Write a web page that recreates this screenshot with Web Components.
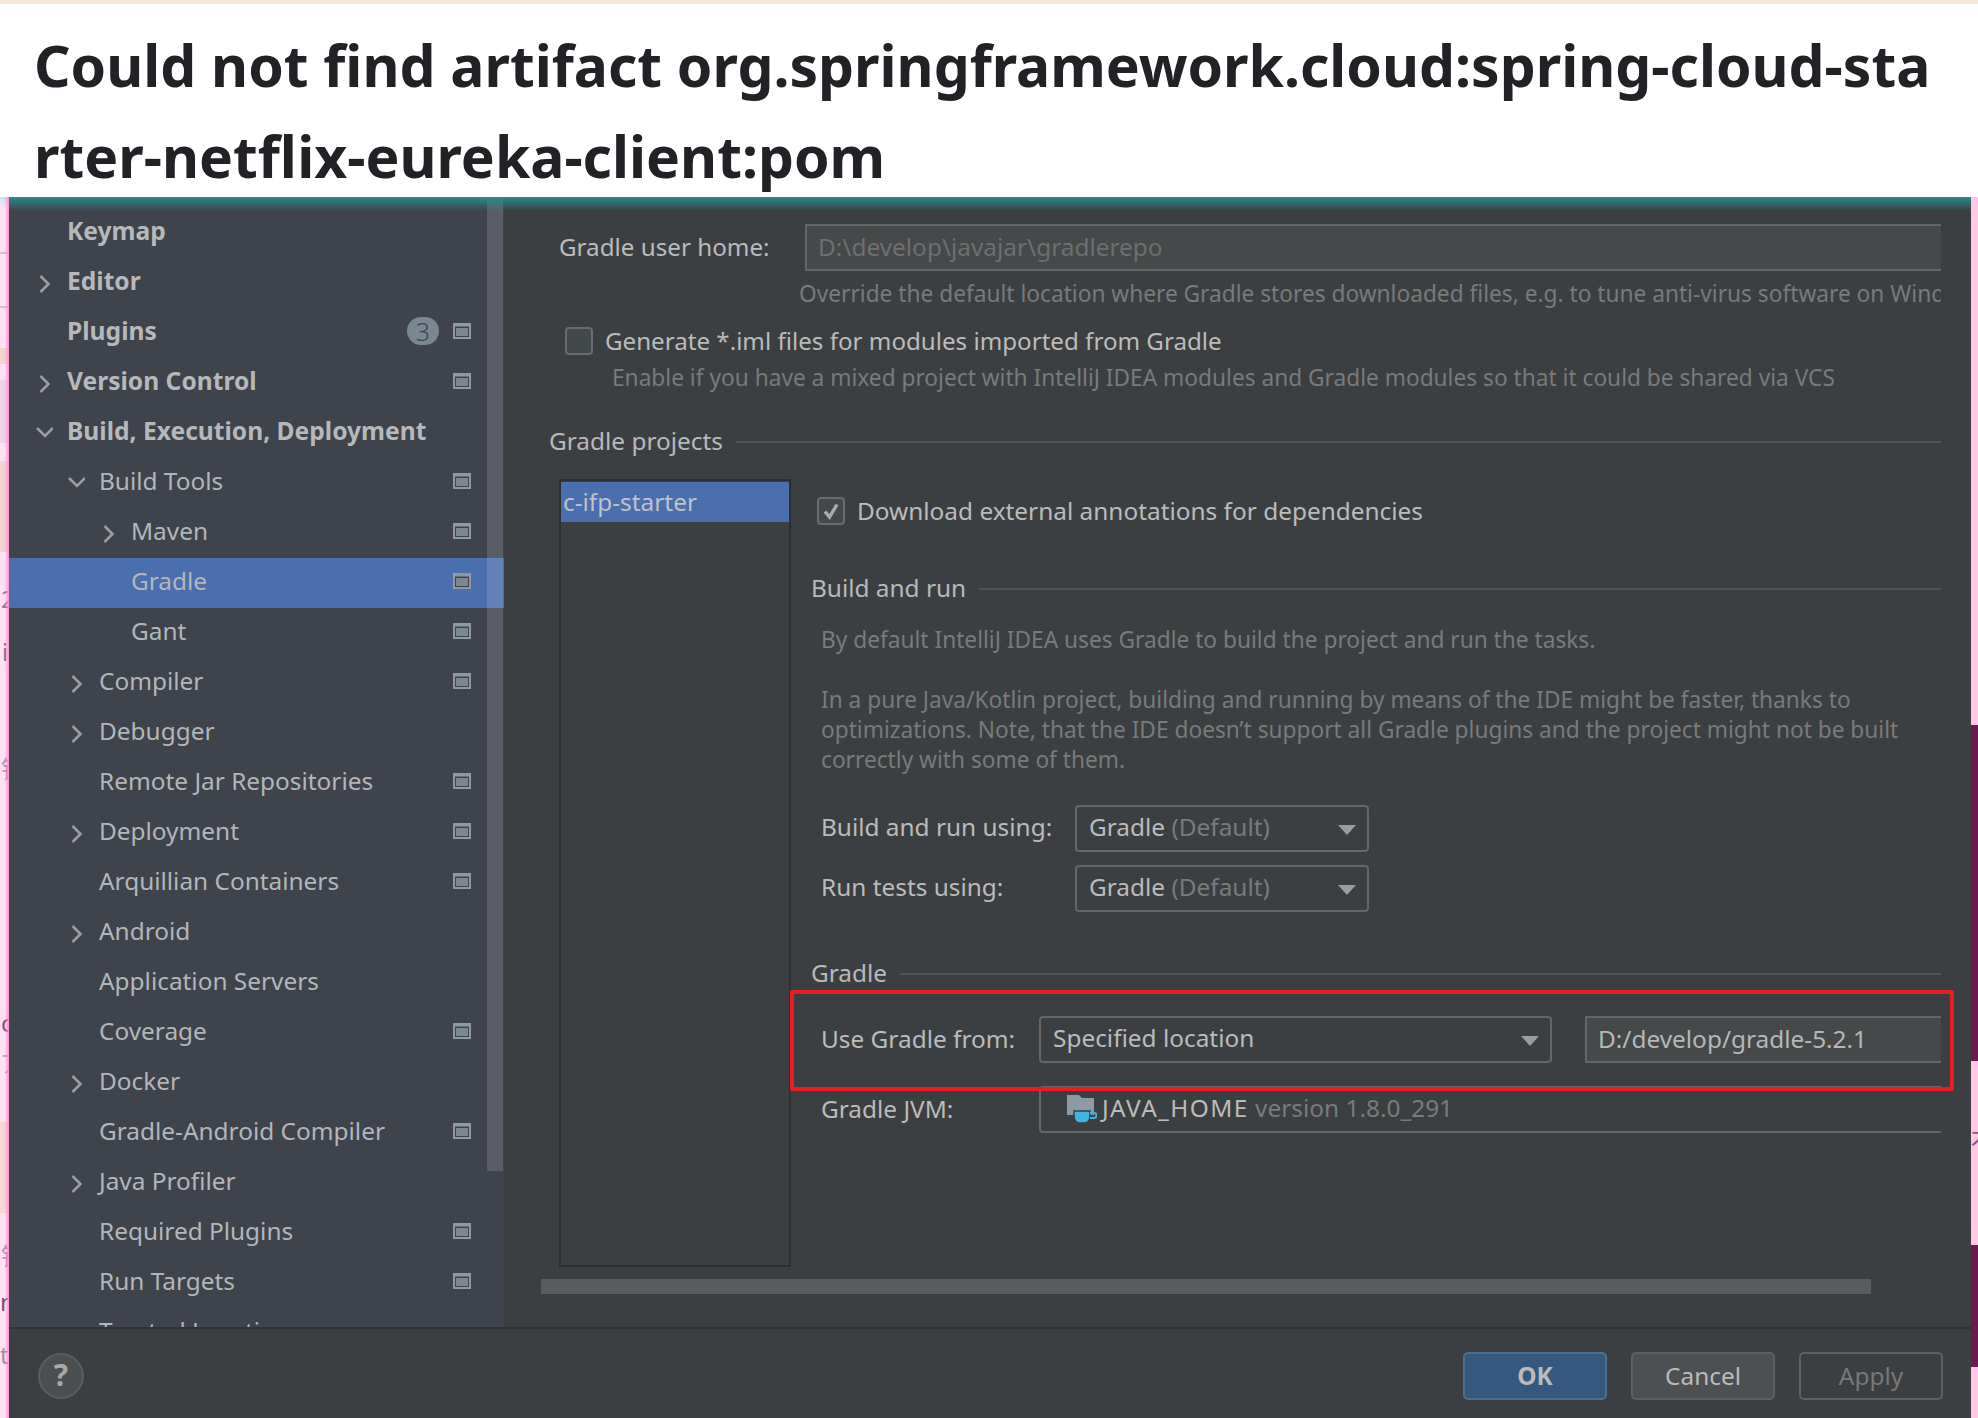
<!DOCTYPE html>
<html lang="en">

<head>
    <meta charset="UTF-8">
    <title>Could not find artifact</title>
    <style>
        html, body { margin: 0; height: 1418px; overflow: hidden; background: #fff; }
        body { font-family: "Noto Sans", "Noto Sans CJK SC", sans-serif; }
    </style>
</head>

<body>
    <article-shot>
        <article-title>Could not find artifact org.springframework.cloud:spring-cloud-starter-netflix-eureka-client:pom</article-title>
        <edge-strip slot="left" side="left"></edge-strip>
        <settings-dialog slot="dialog">
            <settings-tree slot="tree">
                <tree-row bold>Keymap</tree-row>
                <tree-row bold arrow="right">Editor</tree-row>
                <tree-row bold badge="3" mark>Plugins</tree-row>
                <tree-row bold arrow="right" mark>Version Control</tree-row>
                <tree-row bold arrow="down">Build, Execution, Deployment</tree-row>
                <tree-row level="1" arrow="down" mark>Build Tools</tree-row>
                <tree-row level="2" arrow="right" mark>Maven</tree-row>
                <tree-row level="2" selected mark>Gradle</tree-row>
                <tree-row level="2" mark>Gant</tree-row>
                <tree-row level="1" arrow="right" mark>Compiler</tree-row>
                <tree-row level="1" arrow="right">Debugger</tree-row>
                <tree-row level="1" mark>Remote Jar Repositories</tree-row>
                <tree-row level="1" arrow="right" mark>Deployment</tree-row>
                <tree-row level="1" mark>Arquillian Containers</tree-row>
                <tree-row level="1" arrow="right">Android</tree-row>
                <tree-row level="1">Application Servers</tree-row>
                <tree-row level="1" mark>Coverage</tree-row>
                <tree-row level="1" arrow="right">Docker</tree-row>
                <tree-row level="1" mark>Gradle-Android Compiler</tree-row>
                <tree-row level="1" arrow="right">Java Profiler</tree-row>
                <tree-row level="1" mark>Required Plugins</tree-row>
                <tree-row level="1" mark>Run Targets</tree-row>
                <tree-row level="1">Trusted Locations</tree-row>
            </settings-tree>
            <gradle-panel slot="panel"></gradle-panel>
            <dialog-footer slot="footer"></dialog-footer>
        </settings-dialog>
        <edge-strip slot="right" side="right"></edge-strip>
    </article-shot>

    <script>
        // small helper, every element gets an open shadow root with its own style
        function shadow(el, css, html) {
            var root = el.attachShadow({ mode: 'open' });
            root.innerHTML = '<style>' + css + '</style>' + html;
            return root;
        }

        class ArticleShot extends HTMLElement {
            connectedCallback() {
                shadow(this, `
                    :host { display: flex; flex-direction: column; width: 1978px; height: 1418px; overflow: hidden; }
                    .paper { height: 4px; background: #f1e9d5; }
                    .row { display: flex; height: 1221px; }
                    .dialog { flex: 1; min-width: 0; display: flex; }
                `, `
                    <div class="paper"></div>
                    <slot></slot>
                    <div class="row">
                        <slot name="left"></slot>
                        <div class="dialog"><slot name="dialog"></slot></div>
                        <slot name="right"></slot>
                    </div>
                `);
            }
        }

        class ArticleTitle extends HTMLElement {
            connectedCallback() {
                shadow(this, `
                    :host { display: block; height: 193px; box-sizing: border-box; padding: 16px 38px 0 34px; overflow: hidden; background: #fff;
                        color: #222226; font: 700 57px/91px "Noto Sans", "Noto Sans CJK SC", sans-serif; word-break: break-all; }
                `, `<slot></slot>`);
            }
        }

        // the slivers of the page behind the dialog
        class EdgeStrip extends HTMLElement {
            connectedCallback() {
                var left = this.getAttribute('side') == 'left';
                shadow(this, `
                    :host { display: block; flex: none; width: ${left ? 9 : 7}px; height: 1221px; overflow: hidden; position: relative;
                        background: ${left ? '#ffe2f3' : '#ffc9e6'}; }
                    :host::after { content: ""; position: absolute; left: 0; top: 0; right: 0; bottom: 0;
                        background: ${left ? 'linear-gradient(90deg, rgba(255,240,250,.25), rgba(255,200,235,.25) 55%, #ff8fd4)' : 'none'}; }
                    .band { height: var(--h); margin-top: var(--t); background: var(--c); }
                    .txt { height: var(--h); margin-top: var(--t); font: 24px/32px "Noto Sans", "Noto Sans CJK SC", sans-serif; color: #8e4f83; white-space: nowrap; overflow: hidden; padding-left: var(--x); }
                    .teal { height: 12px; background: linear-gradient(#bfe3ee, transparent); margin-bottom: -12px; }
                `, left ? `
                    <div class="teal"></div>
                    <div class="band" style="--t:55px;--h:2px;--c:#d8a9c6"></div>
                    <div class="band" style="--t:52px;--h:2px;--c:#d8a9c6"></div>
                    <div class="band" style="--t:40px;--h:16px;--c:#f5cdbf"></div>
                    <div class="band" style="--t:16px;--h:63px;--c:#e8cfe6"></div>
                    <div class="band" style="--t:18px;--h:91px;--c:#f3cdc6"></div>
                    <div class="txt" style="--t:31px;--h:32px;--x:1px">2</div>
                    <div class="txt" style="--t:21px;--h:32px;--x:2px;color:#6d4a5c">i</div>
                    <div class="txt" style="--t:85px;--h:32px;--x:1px;color:#b0709f">钱</div>
                    <div class="txt" style="--t:222px;--h:32px;--x:1px;color:#6a1a5e">c</div>
                    <div class="txt" style="--t:8px;--h:32px;--x:0;color:#a98aa6">ア</div>
                    <div class="band" style="--t:43px;--h:91px;--c:#f5d3ca"></div>
                    <div class="txt" style="--t:27px;--h:32px;--x:1px;color:#b0709f">钱</div>
                    <div class="txt" style="--t:14px;--h:32px;--x:0;color:#4a2346">n</div>
                    <div class="txt" style="--t:21px;--h:32px;--x:0;color:#8a6a86">t,</div>
                ` : `
                    <div class="band" style="--t:528px;--h:336px;--c:#6a1c50"></div>
                    <div class="txt" style="--t:60px;--h:32px;--x:0;color:#8e4f83">木</div>
                    <div class="band" style="--t:92px;--h:122px;--c:#6a1c50"></div>
                `);
            }
        }

        class SettingsDialog extends HTMLElement {
            connectedCallback() {
                shadow(this, `
                    :host { display: flex; flex-direction: column; flex: 1; min-width: 0; position: relative; height: 1221px; background: #3c3f41;
                        font: 24.4px/30px "Noto Sans", "Noto Sans CJK SC", sans-serif; color: #bbb; }
                    :host::before { content: ""; position: absolute; left: 0; right: 0; top: 0; height: 14px; z-index: 3; pointer-events: none;
                        background: linear-gradient(#2b8a8e, rgba(43, 138, 142, 0)); }
                    .body { display: flex; height: 1130px; overflow: hidden; }
                    .mark { position: absolute; left: 781px; top: 793px; width: 1164px; height: 101px; box-sizing: border-box; border: 4px solid #ed1c24; border-radius: 2px; z-index: 2; }
                `, `
                    <div class="body">
                        <slot name="tree"></slot>
                        <slot name="panel"></slot>
                    </div>
                    <slot name="footer"></slot>
                    <div class="mark"></div>
                `);
            }
        }

        class SettingsTree extends HTMLElement {
            connectedCallback() {
                shadow(this, `
                    :host { display: block; flex: none; width: 495px; height: 1130px; box-sizing: border-box; padding-top: 11px; overflow: hidden; background: #3f434c; position: relative; }
                    .thumb { position: absolute; left: 478px; top: 0; width: 16px; height: 974px; background: rgba(255, 255, 255, .14); }
                `, `<slot></slot><div class="thumb"></div>`);
            }
        }

        class TreeRow extends HTMLElement {
            connectedCallback() {
                var level = +(this.getAttribute('level') || 0);
                var arrow = this.getAttribute('arrow');
                var badge = this.getAttribute('badge');
                var bold = this.hasAttribute('bold');
                var chevron = '';
                if (arrow == 'right') chevron = '<svg width="18" height="20" viewBox="0 0 18 20"><path d="M5.5 1 13.5 9 5.5 17" fill="none" stroke="#9b9da0" stroke-width="2.6"/></svg>';
                if (arrow == 'down') chevron = '<svg width="18" height="20" viewBox="0 0 18 20"><path d="M2 3 10 11 18 3" fill="none" stroke="#9b9da0" stroke-width="2.6"/></svg>';
                var mark = this.hasAttribute('mark') ? '<svg class="mark" width="18" height="16" viewBox="0 0 18 16"><rect width="18" height="16" fill="#8f99a3"/><rect x="2" y="3.5" width="14" height="10.5" fill="#3f434c"/><rect x="3" y="5" width="12" height="8" fill="#7b8894"/></svg>' : '';
                shadow(this, `
                    :host { display: flex; align-items: center; height: 50px; box-sizing: border-box; padding-left: ${26 + 32 * level}px; padding-right: 33px; white-space: nowrap;
                        ${this.hasAttribute('selected') ? 'background: #4b6eaf;' : ''} font-weight: ${bold ? 700 : 400}; color: ${bold ? '#b6b8ba' : '#b3b6b9'}; ${bold ? 'font-size: 24.6px;' : ''} }
                    .arrow { flex: none; width: 32px; height: 20px; margin-top: -4px; }
                    .label { flex: 1; margin-top: -5px; }
                    .badge { width: 32px; height: 28px; border-radius: 14px; background: #7a8791; color: #3f434c; font-size: 25px; line-height: 28px; text-align: center; margin: -4px 14px 0 0; font-weight: 300; }
                    .mark { display: block; flex: none; margin-top: -5px; }
                `, `
                    <span class="arrow">${chevron}</span>
                    <span class="label"><slot></slot></span>
                    ${badge ? '<span class="badge">' + badge + '</span>' : ''}
                    ${mark}
                `);
            }
        }

        class GroupTitle extends HTMLElement {
            connectedCallback() {
                shadow(this, `
                    :host { display: flex; align-items: center; height: 30px; white-space: nowrap; color: #b7b9ba; }
                    .line { flex: 1; height: 2px; margin-left: 13px; margin-top: 2px; background: #515355; }
                `, `<span><slot></slot></span><div class="line"></div>`);
            }
        }

        class CheckRow extends HTMLElement {
            connectedCallback() {
                var tick = this.hasAttribute('checked') ? '<svg width="24" height="24" viewBox="0 0 24 24"><path d="M6 12.5 10.5 18 18 5.5" fill="none" stroke="#a9abad" stroke-width="3.4"/></svg>' : '';
                shadow(this, `
                    :host { display: flex; align-items: center; height: 34px; white-space: nowrap; }
                    .box { flex: none; width: 28px; height: 28px; box-sizing: border-box; border: 2px solid #696b6d; border-radius: 4px; background: #43494a; margin-right: 12px; display: flex; align-items: center; justify-content: center; }
                `, `<div class="box">${tick}</div><span><slot></slot></span>`);
            }
        }

        class ComboBox extends HTMLElement {
            connectedCallback() {
                shadow(this, `
                    :host { display: flex; align-items: center; box-sizing: border-box; height: 47px; border: 2px solid #646667; border-radius: 4px; padding: 0 11px 0 12px; white-space: nowrap; background: #3c3f41; }
                    .value { flex: 1; margin-top: -3px; }
                    .tri { flex: none; width: 0; height: 0; border-left: 9px solid transparent; border-right: 9px solid transparent; border-top: 10px solid #9a9c9e; margin-top: 2px; }
                `, `<span class="value"><slot></slot></span>${this.hasAttribute('plain') ? '' : '<span class="tri"></span>'}`);
            }
        }

        class TextField extends HTMLElement {
            connectedCallback() {
                shadow(this, `
                    :host { display: flex; align-items: center; box-sizing: border-box; height: 47px; border: 2px solid #646667; padding: 0 0 2px 11px; background: #45494a; white-space: nowrap; margin-right: -8px; }
                `, `<slot></slot>`);
            }
        }

        class GradlePanel extends HTMLElement {
            connectedCallback() {
                shadow(this, `
                    :host { display: block; flex: 1; min-width: 0; height: 1130px; overflow: hidden; }
                    .clip { width: 1437px; height: 1130px; overflow: hidden; }
                    .row { display: flex; align-items: center; white-space: nowrap; }
                    .home { margin: 27px 0 0 55px; }
                    .home label { width: 246px; flex: none; margin-top: -2px; font-size: 24.2px; }
                    .home text-field { flex: 1; color: #6d6f70; }
                    .hint { color: #787a7b; white-space: nowrap; height: 30px; font-size: 22.7px; }
                    .h1 { margin: 8px 0 0 295px; }
                    .gen { margin: 15px 0 0 61px; font-size: 24.15px; }
                    .h2 { margin: 5px 0 0 108px; }
                    .projects { margin: 33px 0 0 45px; }
                    .split { display: flex; margin: 23px 0 0 55px; height: 788px; }
                    .list { flex: none; width: 232px; box-sizing: border-box; border: 2px solid #2d2e30; padding-top: 1px; }
                    .item { height: 40px; line-height: 40px; padding-left: 2px; background: #4b6eaf; color: #bfc2c6; }
                    .right { flex: 1; min-width: 0; }
                    .dl { margin: 15px 0 0 26px; }
                    .bar { margin: 45px 0 0 20px; }
                    .text { margin: 22px 0 0 30px; color: #787a7b; font-size: 22.7px; }
                    .text p { margin: 0; white-space: nowrap; height: 30px; }
                    .using { margin-top: 30px; padding-left: 30px; }
                    .using + .using { margin-top: 13px; }
                    .using label { width: 254px; flex: none; margin-top: -3px; }
                    .using combo-box { width: 294px; }
                    .using span { color: #787a7b; }
                    .gradle { margin: 46px 0 0 20px; }
                    .from { margin-top: 28px; padding-left: 30px; }
                    .from label, .jvm label { width: 218px; flex: none; margin-top: -2px; }
                    .from combo-box { width: 513px; flex: none; }
                    .from text-field { flex: 1; margin-left: 33px; color: #b5b7b9; }
                    .jvm { margin-top: 23px; padding-left: 30px; }
                    .jvm combo-box { flex: 1; margin-right: -8px; padding-left: 26px; }
                    .jvm span { color: #787a7b; }
                    .jdk { vertical-align: -6px; margin-right: 5px; }
                    .home-name { letter-spacing: 1.4px; font-weight: 400; }
                    .hscroll { height: 15px; width: 1330px; margin: 12px 0 0 37px; background: #5a5b5d; }
                `, `
                    <div class="clip">
                        <div class="row home"><label>Gradle user home:</label><text-field>D:\\develop\\javajar\\gradlerepo</text-field></div>
                        <div class="hint h1">Override the default location where Gradle stores downloaded files, e.g. to tune anti-virus software on Windows</div>
                        <check-row class="gen">Generate *.iml files for modules imported from Gradle</check-row>
                        <div class="hint h2">Enable if you have a mixed project with IntelliJ IDEA modules and Gradle modules so that it could be shared via VCS</div>
                        <group-title class="projects">Gradle projects</group-title>
                        <div class="split">
                            <div class="list"><div class="item">c-ifp-starter</div></div>
                            <div class="right">
                                <check-row class="dl" checked>Download external annotations for dependencies</check-row>
                                <group-title class="bar">Build and run</group-title>
                                <div class="text">
                                    <p>By default IntelliJ IDEA uses Gradle to build the project and run the tasks.</p>
                                    <p></p>
                                    <p>In a pure Java/Kotlin project, building and running by means of the IDE might be faster, thanks to</p>
                                    <p>optimizations. Note, that the IDE doesn’t support all Gradle plugins and the project might not be built</p>
                                    <p>correctly with some of them.</p>
                                </div>
                                <div class="row using"><label>Build and run using:</label><combo-box>Gradle <span>(Default)</span></combo-box></div>
                                <div class="row using"><label>Run tests using:</label><combo-box>Gradle <span>(Default)</span></combo-box></div>
                                <group-title class="gradle">Gradle</group-title>
                                <div class="row from"><label>Use Gradle from:</label><combo-box>Specified location</combo-box><text-field>D:/develop/gradle-5.2.1</text-field></div>
                                <div class="row jvm"><label>Gradle JVM:</label><combo-box plain>
                                    <svg class="jdk" width="30" height="28" viewBox="0 0 30 28"><path d="M0 0H12L15 3H27V20H0Z" fill="#8b9aa5"/><path d="M7 16H23V22A6 6 0 0 1 17 28H13A6 6 0 0 1 7 22Z" fill="#3bb4e6" stroke="#3c3f41" stroke-width="1.5"/><path d="M23 18H27A2 2 0 0 1 27 23H23" fill="none" stroke="#3bb4e6" stroke-width="2"/></svg><b class="home-name">JAVA_HOME</b> <span>version 1.8.0_291</span>
                                </combo-box></div>
                            </div>
                        </div>
                        <div class="hscroll"></div>
                    </div>
                `);
            }
        }

        class DialogButton extends HTMLElement {
            connectedCallback() {
                var kind = this.getAttribute('kind');
                var look = {
                    ok: 'background:#365880;border-color:#4c708c;color:#bbb;font-weight:700;',
                    cancel: 'background:#4c5052;border-color:#5e6060;color:#bbb;',
                    off: 'background:#3c3f41;border-color:#5e6060;color:#777;'
                }[kind];
                shadow(this, `
                    :host { display: flex; align-items: center; justify-content: center; box-sizing: border-box; width: 144px; height: 48px; border: 2px solid; border-radius: 5px; padding-bottom: 1px; ${look} }
                `, `<slot></slot>`);
            }
        }

        class DialogFooter extends HTMLElement {
            connectedCallback() {
                shadow(this, `
                    :host { display: flex; flex: 1; box-sizing: border-box; border-top: 2px solid #323232; padding: 23px 28px 0 29px; margin-top: 0; gap: 24px; }
                    .help { width: 46px; height: 46px; box-sizing: border-box; margin-top: 1px; border: 2px solid #5a5d5f; border-radius: 50%; background: #4b4f51; color: #a6a8aa; font-weight: 700; font-size: 30px; line-height: 40px; text-align: center; margin-right: auto; }
                `, `
                    <div class="help">?</div>
                    <dialog-button kind="ok">OK</dialog-button>
                    <dialog-button kind="cancel">Cancel</dialog-button>
                    <dialog-button kind="off">Apply</dialog-button>
                `);
            }
        }

        customElements.define('article-shot', ArticleShot);
        customElements.define('article-title', ArticleTitle);
        customElements.define('edge-strip', EdgeStrip);
        customElements.define('settings-dialog', SettingsDialog);
        customElements.define('settings-tree', SettingsTree);
        customElements.define('tree-row', TreeRow);
        customElements.define('group-title', GroupTitle);
        customElements.define('check-row', CheckRow);
        customElements.define('combo-box', ComboBox);
        customElements.define('text-field', TextField);
        customElements.define('gradle-panel', GradlePanel);
        customElements.define('dialog-button', DialogButton);
        customElements.define('dialog-footer', DialogFooter);
    </script>
</body>

</html>
